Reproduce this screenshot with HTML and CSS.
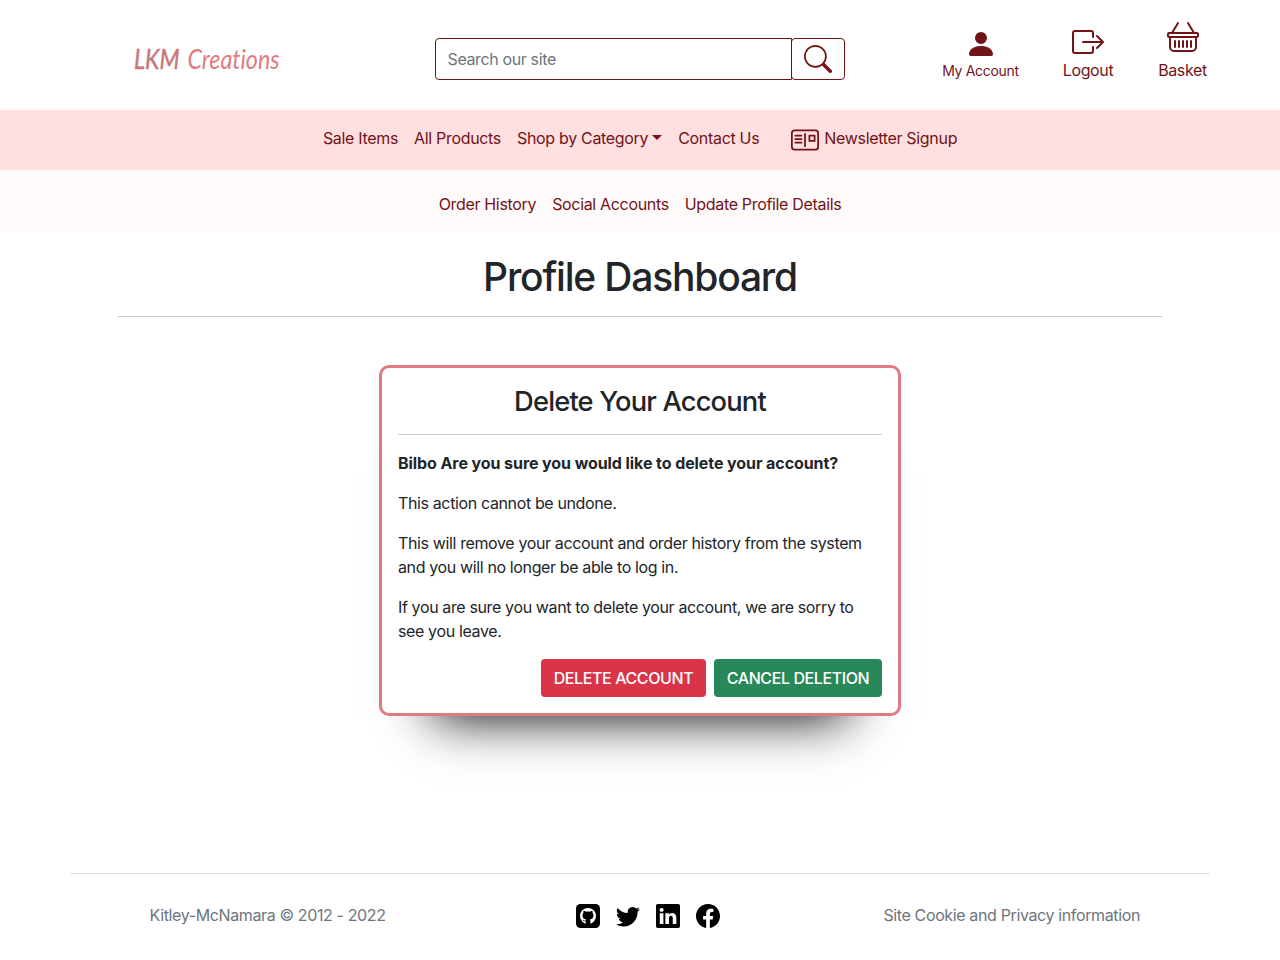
FILE: index.html
```html
<!DOCTYPE html>
<html lang="en">
<head>
<meta charset="utf-8">
<title>LKM Creations</title>
<link rel="stylesheet" href="styles.css">
</head>
<body>
<header class="site-header">
  <a class="logo"><span class="logo-text"><b>LKM</b> Creations</span></a>
  <form class="search">
    <div class="search-input"><span>Search our site</span></div>
    <div class="search-button">
      <svg width="28" height="28" viewBox="0 0 16 16" fill="currentColor"><path d="M11.742 10.344a6.5 6.5 0 1 0-1.397 1.398h-.001c.03.04.062.078.098.115l3.85 3.85a1 1 0 0 0 1.415-1.414l-3.85-3.85a1.007 1.007 0 0 0-.115-.1zM12 6.5a5.5 5.5 0 1 1-11 0 5.5 5.5 0 0 1 11 0z"/></svg>
    </div>
  </form>
  <div class="actions">
    <a class="action account">
      <svg width="32" height="32" viewBox="0 0 16 16" fill="currentColor"><path d="M3 14s-1 0-1-1 1-4 6-4 6 3 6 4-1 1-1 1H3zm5-6a3 3 0 1 0 0-6 3 3 0 0 0 0 6z"/></svg>
      <span class="small">My Account</span>
    </a>
    <a class="action logout">
      <svg width="32" height="32" viewBox="0 0 16 16" fill="currentColor"><path d="M10 12.5a.5.5 0 0 1-.5.5h-8a.5.5 0 0 1-.5-.5v-9a.5.5 0 0 1 .5-.5h8a.5.5 0 0 1 .5.5v2a.5.5 0 0 0 1 0v-2A1.5 1.5 0 0 0 9.5 2h-8A1.5 1.5 0 0 0 0 3.5v9A1.5 1.5 0 0 0 1.5 14h8a1.5 1.5 0 0 0 1.5-1.5v-2a.5.5 0 0 0-1 0v2z"/><path d="M15.854 8.354a.5.5 0 0 0 0-.708l-3-3a.5.5 0 0 0-.708.708L14.293 7.5H5.5a.5.5 0 0 0 0 1h8.793l-2.147 2.146a.5.5 0 0 0 .708.708l3-3z"/></svg>
      <span>Logout</span>
    </a>
    <a class="action basket">
      <svg width="32" height="32" viewBox="0 0 16 16" fill="currentColor"><path d="M5.757 1.071a.5.5 0 0 1 .172.686L3.383 6h9.234L10.07 1.757a.5.5 0 1 1 .858-.514L13.783 6H15a1 1 0 0 1 1 1v1a1 1 0 0 1-1 1v4.5a2.5 2.5 0 0 1-2.5 2.5h-9A2.5 2.5 0 0 1 1 13.5V9a1 1 0 0 1-1-1V7a1 1 0 0 1 1-1h1.217L5.07 1.243a.5.5 0 0 1 .686-.172zM2 9v4.5A1.5 1.5 0 0 0 3.5 15h9a1.5 1.5 0 0 0 1.5-1.5V9H2zM1 7v1h14V7H1zm3 3a.5.5 0 0 1 .5.5v3a.5.5 0 0 1-1 0v-3A.5.5 0 0 1 4 10zm2 0a.5.5 0 0 1 .5.5v3a.5.5 0 0 1-1 0v-3A.5.5 0 0 1 6 10zm2 0a.5.5 0 0 1 .5.5v3a.5.5 0 0 1-1 0v-3A.5.5 0 0 1 8 10zm2 0a.5.5 0 0 1 .5.5v3a.5.5 0 0 1-1 0v-3a.5.5 0 0 1 .5-.5zm2 0a.5.5 0 0 1 .5.5v3a.5.5 0 0 1-1 0v-3a.5.5 0 0 1 .5-.5z"/></svg>
      <span>Basket</span>
    </a>
  </div>
</header>
<nav class="main-nav">
  <a>Sale Items</a>
  <a>All Products</a>
  <a class="dropdown">Shop by Category</a>
  <a>Contact Us</a>
  <a class="newsletter">
    <svg width="28" height="28" viewBox="0 0 16 16" fill="none" stroke="currentColor" stroke-linecap="round"><rect x=".5" y="2.5" width="15" height="11" rx="1.5"/><path d="M2.5 5.5H6M2.5 7.5H6M2.5 9.5H6M8 4.5v7"/><path d="M10.5 5.5h3v3h-3z" stroke-linejoin="round"/></svg>
    <span>Newsletter Signup</span>
  </a>
</nav>
<nav class="sub-nav">
  <a>Order History</a>
  <a>Social Accounts</a>
  <a>Update Profile Details</a>
</nav>
<main class="content">
  <h1>Profile Dashboard</h1>
  <hr>
  <section class="card">
    <h2>Delete Your Account</h2>
    <hr>
    <p class="strong">Bilbo Are you sure you would like to delete your account?</p>
    <p>This action cannot be undone.</p>
    <p>This will remove your account and order history from the system<br>and you will no longer be able to log in.</p>
    <p>If you are sure you want to delete your account, we are sorry to<br>see you leave.</p>
    <div class="buttons">
      <a class="btn danger">DELETE ACCOUNT</a>
      <a class="btn success">CANCEL DELETION</a>
    </div>
  </section>
</main>
<footer class="site-footer">
  <div class="copyright">Kitley-McNamara © 2012 - 2022</div>
  <div class="social">
    <svg width="24" height="24" viewBox="0 0 24 24"><rect width="24" height="24" rx="4.5"/><circle cx="12" cy="12" r="8" fill="#fff"/><path d="M9.7 20.5v-3.2c-2.5.4-2.6-1-3.5-1.5 1.4-.3 1.7 1.2 3.5.8 0-.5.2-.9.5-1.2-2.4-.3-3.7-1.400-3.700-3.900 0-1 .3-1.800.9-2.400-.2-.7-.1-1.500.2-2.300.9 0 1.700.4 2.400.9 1.300-.3 2.700-.3 4 0 .7-.5 1.500-.9 2.400-.9.3.8.4 1.600.2 2.300.6.6.9 1.400.9 2.400 0 2.500-1.300 3.600-3.700 3.900.4.4.6 1 .6 1.700v3.400z"/></svg>
    <svg width="24" height="24" viewBox="0 0 16 16"><path d="M5.026 15c6.038 0 9.341-5.003 9.341-9.334 0-.14 0-.282-.006-.422A6.685 6.685 0 0 0 16 3.542a6.658 6.658 0 0 1-1.889.518 3.301 3.301 0 0 0 1.447-1.817 6.533 6.533 0 0 1-2.087.793A3.286 3.286 0 0 0 7.875 6.03a9.325 9.325 0 0 1-6.767-3.429 3.289 3.289 0 0 0 1.018 4.382A3.323 3.323 0 0 1 .64 6.575v.045a3.288 3.288 0 0 0 2.632 3.218 3.203 3.203 0 0 1-.865.115 3.23 3.23 0 0 1-.614-.057 3.283 3.283 0 0 0 3.067 2.277A6.588 6.588 0 0 1 .78 13.58a6.32 6.32 0 0 1-.78-.045A9.344 9.344 0 0 0 5.026 15z"/></svg>
    <svg width="24" height="24" viewBox="0 0 16 16"><path d="M0 1.146C0 .513.526 0 1.175 0h13.65C15.474 0 16 .513 16 1.146v13.708c0 .633-.526 1.146-1.175 1.146H1.175C.526 16 0 15.487 0 14.854V1.146zm4.943 12.248V6.169H2.542v7.225h2.401zm-1.2-8.212c.837 0 1.358-.554 1.358-1.248-.015-.709-.52-1.248-1.342-1.248-.822 0-1.359.54-1.359 1.248 0 .694.521 1.248 1.327 1.248h.016zm4.908 8.212V9.359c0-.216.016-.432.08-.586.173-.431.568-.878 1.232-.878.869 0 1.216.662 1.216 1.634v3.865h2.401V9.25c0-2.22-1.184-3.252-2.764-3.252-1.274 0-1.845.7-2.165 1.193v.025h-.016a5.54 5.54 0 0 1 .016-.025V6.169h-2.4c.03.678 0 7.225 0 7.225h2.4z"/></svg>
    <svg width="24" height="24" viewBox="0 0 16 16"><path d="M16 8.049c0-4.446-3.582-8.05-8-8.05C3.58 0-.002 3.603-.002 8.05c0 4.017 2.926 7.347 6.75 7.951v-5.625h-2.03V8.05H6.75V6.275c0-2.017 1.195-3.131 3.022-3.131.876 0 1.791.157 1.791.157v1.98h-1.009c-.993 0-1.303.621-1.303 1.258v1.51h2.218l-.354 2.326H9.25V16c3.824-.604 6.75-3.934 6.75-7.951z"/></svg>
  </div>
  <div class="privacy">Site Cookie and Privacy information</div>
</footer>
</body>
</html>
```
FILE: styles.css
```css
* { box-sizing: border-box; }
body { margin: 0; background: #fff; color: #212529; font: 16px/24px Inter, "Noto Sans", sans-serif; letter-spacing: -.37px; }
svg { display: block; flex: none; }
a, span, p, h1, h2, .btn, .copyright, .privacy { white-space: nowrap; }
.site-header { display: flex; height: 110px; color: #721317; }
.logo { width: 435px; padding: 41px 0 0 134px; color: #df7b80; }
.logo-text { display: inline-block; font: italic 400 27px/36px Lato, sans-serif; letter-spacing: 0; word-spacing: 3px; font-variant-ligatures: none; transform: scaleX(.86); transform-origin: 0 50%; }
.logo-text b { font-weight: 400; color: #c9787c; -webkit-text-stroke: .5px #c9787c; }
.search { display: flex; width: 410px; height: 42px; margin: 38px 0 0; }
.search-input { width: 358px; padding: 8px 11.5px; border: 1px solid #721317; border-radius: 4px 0 0 4px; color: #6c757d; }
.search-button { width: 54px; margin-left: -1px; padding: 6px 12px; border: 1px solid #721317; border-radius: 4px; }
.actions { display: flex; margin-left: 97px; }
.action { display: flex; flex-direction: column; align-items: center; }
.account { width: 77px; padding-top: 28px; }
.account .small { font-size: 14px; line-height: 22px; letter-spacing: -.3px; }
.logout { width: 51px; margin-left: 43px; padding-top: 26px; }
.logout span { margin-left: 1px; }
.basket { width: 50px; margin-left: 45px; padding-top: 20px; }
.basket span { margin: 6px 1px 0 0; }
.main-nav { display: flex; justify-content: center; gap: 16px; height: 60px; padding-top: 16px; background: #ffdfe0; color: #721317; letter-spacing: -.32px; }
.dropdown { display: flex; align-items: center; height: 24px; }
.dropdown::after { content: ""; margin: 0 0 1px 4px; border: 5px solid transparent; border-top-color: currentColor; border-bottom: 0; }
.newsletter { display: flex; gap: 5px; margin-left: 16px; }
.sub-nav { display: flex; justify-content: center; gap: 16px; height: 62px; padding-top: 22px; background: #fffafa; color: #721317; letter-spacing: -.33px; }
.content { display: flex; flex-direction: column; height: 641px; padding: 21px 118px 0; align-items: center; }
h1 { margin: 0; font-size: 39px; line-height: 48px; font-weight: 500; letter-spacing: -1.2px; }
hr { width: 100%; height: 1px; margin: 15px 0 48px; border: 0; background: #c8c9ca; }
.card { width: 522px; height: 351px; padding: 17px 16px 16px; border: 3px solid #df7b80; border-radius: 10px; background: #fff; box-shadow: 0 55px 50px -54px #000; }
h2 { margin: 0; text-align: center; font-size: 27.3px; line-height: 34px; font-weight: 500; letter-spacing: -.83px; }
.card hr { margin: 15px 0 16px; }
p { margin: 0 0 16px; }
.strong { font-weight: 700; letter-spacing: -.08px; }
.buttons { display: flex; justify-content: flex-end; gap: 8px; }
.btn { height: 38px; line-height: 38px; border-radius: 4px; color: #fff; text-align: center; font-weight: 500; letter-spacing: -.4px; }
.danger { width: 165px; background: #d93448; }
.success { width: 168px; background: #288857; }
.site-footer { display: grid; grid-template-columns: 426px 144px 1fr; margin: 0 70px; padding: 29px 70px 0 79.5px; border-top: 1px solid #dee2e6; color: #6c757d; }
.social { display: flex; gap: 16px; padding-top: 1px; fill: #000; }
.privacy { text-align: right; }
```
